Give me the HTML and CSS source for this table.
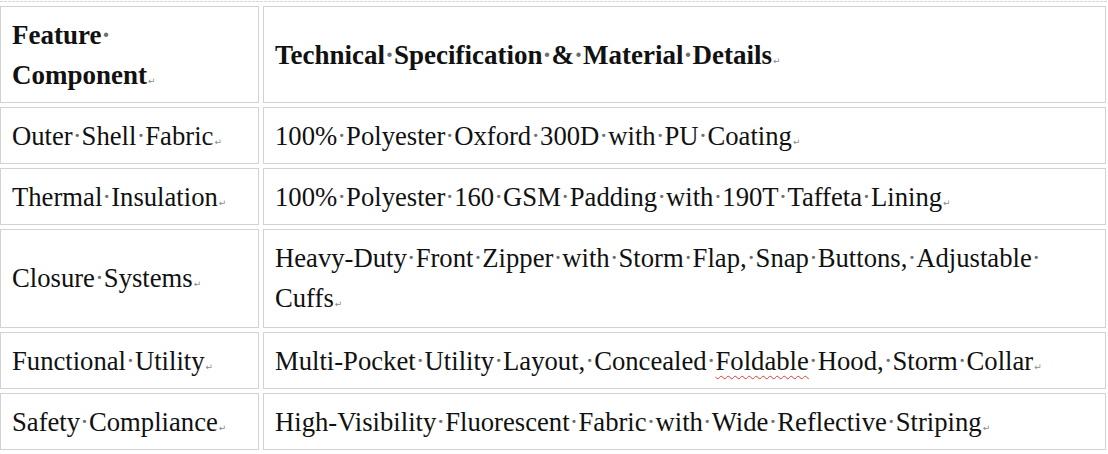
FILE: index.html
```html
<!DOCTYPE html>
<html lang="en">
<head>
<meta charset="utf-8">
<title>Specification Table</title>
<link rel="stylesheet" href="styles.css">
</head>
<body>
<div class="page">
  <div class="rule"></div>
  <div class="table">
    <div class="cell head top"><div class="t">Feature<span class="d">·</span><br>Component<span class="p">↵</span></div></div>
    <div class="cell head"><div class="t">Technical<span class="d">·</span>Specification<span class="d">·</span>&amp;<span class="d">·</span>Material<span class="d">·</span>Details<span class="p">↵</span></div></div>

    <div class="cell"><div class="t">Outer<span class="d">·</span>Shell<span class="d">·</span>Fabric<span class="p">↵</span></div></div>
    <div class="cell"><div class="t">100%<span class="d">·</span>Polyester<span class="d">·</span>Oxford<span class="d">·</span>300D<span class="d">·</span>with<span class="d">·</span>PU<span class="d">·</span>Coating<span class="p">↵</span></div></div>

    <div class="cell"><div class="t">Thermal<span class="d">·</span>Insulation<span class="p">↵</span></div></div>
    <div class="cell"><div class="t">100%<span class="d">·</span>Polyester<span class="d">·</span>160<span class="d">·</span>GSM<span class="d">·</span>Padding<span class="d">·</span>with<span class="d">·</span>190T<span class="d">·</span>Taffeta<span class="d">·</span>Lining<span class="p">↵</span></div></div>

    <div class="cell tall"><div class="t">Closure<span class="d">·</span>Systems<span class="p">↵</span></div></div>
    <div class="cell tall"><div class="t">Heavy-Duty<span class="d">·</span>Front<span class="d">·</span>Zipper<span class="d">·</span>with<span class="d">·</span>Storm<span class="d">·</span>Flap,<span class="d">·</span>Snap<span class="d">·</span>Buttons,<span class="d">·</span>Adjustable<span class="d">·</span><br>Cuffs<span class="p">↵</span></div></div>

    <div class="cell"><div class="t">Functional<span class="d">·</span>Utility<span class="p">↵</span></div></div>
    <div class="cell"><div class="t">Multi-Pocket<span class="d">·</span>Utility<span class="d">·</span>Layout,<span class="d">·</span>Concealed<span class="d">·</span><span class="spell">Foldable</span><span class="d">·</span>Hood,<span class="d">·</span>Storm<span class="d">·</span>Collar<span class="p">↵</span></div></div>

    <div class="cell"><div class="t">Safety<span class="d">·</span>Compliance<span class="p">↵</span></div></div>
    <div class="cell"><div class="t">High-Visibility<span class="d">·</span>Fluorescent<span class="d">·</span>Fabric<span class="d">·</span>with<span class="d">·</span>Wide<span class="d">·</span>Reflective<span class="d">·</span>Striping<span class="p">↵</span></div></div>
  </div>
</div>
</body>
</html>
```

FILE: styles.css
```css
html, body {
  margin: 0;
  padding: 0;
  background: #ffffff;
}

.page {
  width: 1108px;
  padding-top: 1px;
}

.rule {
  height: 1px;
  margin-bottom: 4px;
  background: repeating-linear-gradient(to right, #d6d6d6 0, #d6d6d6 3px, #ffffff 3px, #ffffff 4px);
}

.table {
  display: grid;
  grid-template-columns: 259px 843px;
  column-gap: 4px;
  row-gap: 4px;
  font-family: "Liberation Serif", "Times New Roman", serif;
  font-size: 26.67px;
  line-height: 40px;
  color: #111111;
}

.cell {
  border: 1px solid #d2d2d2;
  padding: 8px 11px 7px 11px;
  display: flex;
  align-items: center;
}

.cell.tall {
  padding-bottom: 9px;
}

.cell.head {
  font-weight: bold;
  font-size: 27px;
}

.t {
  white-space: nowrap;
}

.d {
  color: #6e6e6e;
}

.p {
  font-family: "DejaVu Sans", sans-serif;
  font-size: 9px;
  line-height: 0;
  font-weight: normal;
  color: #8a8a8a;
  margin-left: 1px;
}

.spell {
  text-decoration: underline wavy #e03a3a;
  text-decoration-thickness: 1px;
  text-underline-offset: 5px;
}
```
